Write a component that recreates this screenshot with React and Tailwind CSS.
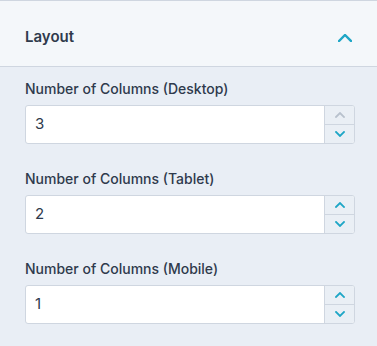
const fields = [
  { label: "Number of Columns (Desktop)", value: "3", upDisabled: true },
  { label: "Number of Columns (Tablet)", value: "2" },
  { label: "Number of Columns (Mobile)", value: "1" },
];

const Chevron = ({ up = true, className = "", w = 10, h = 6, stroke = 1.8 }) => (
  <svg width={w} height={h} viewBox={`0 0 ${w} ${h}`} fill="none" className={className}>
    <polyline
      points={
        up
          ? `1,${h - 1} ${w / 2},1 ${w - 1},${h - 1}`
          : `1,1 ${w / 2},${h - 1} ${w - 1},1`
      }
      stroke="currentColor"
      strokeWidth={stroke}
      strokeLinecap="square"
      strokeLinejoin="miter"
    />
  </svg>
);

const NumberField = ({ label, value, upDisabled = false }) => (
  <div className="flex flex-col">
    <label className="text-[14px] font-medium text-[#2f3a4c] leading-[18px] mb-[7px]">
      {label}
    </label>
    <div className="flex h-[39px] rounded-[3px] border border-[#cfd6e0] bg-white overflow-hidden">
      <div className="flex-1 flex items-center pl-[9px] text-[15px] text-[#2f3a4c]">
        {value}
      </div>
      <div className="w-[30px] flex flex-col border-l border-[#cfd6e0] bg-[#eaeff5]">
        <div className="flex-1 flex items-center justify-center border-b border-[#cfd6e0]">
          <Chevron up className={upDisabled ? "text-[#b8c1cd]" : "text-[#1ea6c6]"} />
        </div>
        <div className="flex-1 flex items-center justify-center">
          <Chevron up={false} className="text-[#1ea6c6]" />
        </div>
      </div>
    </div>
  </div>
);

export default function App() {
  return (
    <div
      className="w-[377px] h-[346px] bg-[#e9eef5] border-t border-[#cfd6e0]"
      style={{ fontFamily: "Inter, 'Liberation Sans', sans-serif" }}
    >
      <div className="h-[66px] bg-[#f4f7fa] border-b border-[#cfd6e0] flex items-center justify-between pt-[8px] pl-[25px] pr-[25px]">
        <span className="text-[15px] font-semibold text-[#2f3a4c]">Layout</span>
        <Chevron w={14} h={8} stroke={2.4} className="text-[#1ea6c6]" />
      </div>
      <div className="pl-[25px] pr-[22px] pt-[13px] flex flex-col gap-[26px]">
        {fields.map((f) => (
          <NumberField key={f.label} {...f} />
        ))}
      </div>
    </div>
  );
}
